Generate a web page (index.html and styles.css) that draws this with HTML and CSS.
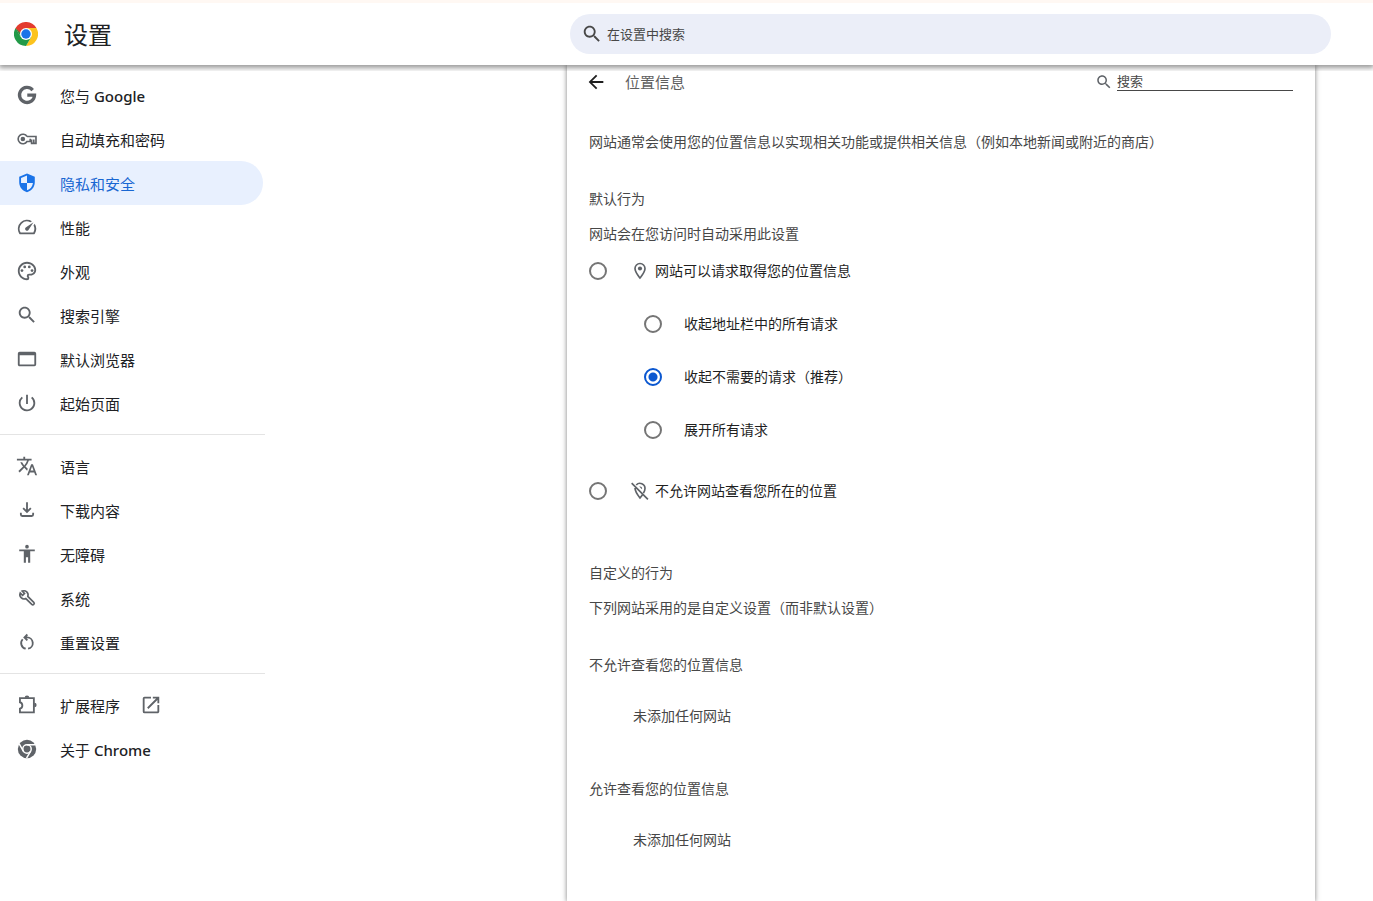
FILE: index.html
```html
<!DOCTYPE html>
<html lang="zh-CN">
<head>
<meta charset="utf-8">
<meta name="viewport" content="width=device-width, initial-scale=1">
<title>设置</title>
<link rel="stylesheet" href="styles.css">
</head>
<body>
<svg class="defs" aria-hidden="true">
  <symbol id="search" viewBox="0 0 24 24"><path d="M15.5 14h-.79l-.28-.27C15.41 12.59 16 11.11 16 9.5 16 5.91 13.09 3 9.5 3S3 5.91 3 9.5 5.91 16 9.5 16c1.61 0 3.09-.59 4.23-1.57l.27.28v.79l5 4.99L20.49 19l-4.99-5zm-6 0C7.01 14 5 11.99 5 9.5S7.01 5 9.5 5 14 7.01 14 9.5 11.99 14 9.5 14z"/></symbol>
</svg>
<header class="toolbar">
  <div class="brand">
    <svg class="logo" viewBox="0 0 48 48" aria-hidden="true">
      <path fill="#e33b2e" d="M24 24 3.2 12A24 24 0 0 1 44.8 12z"/>
      <path fill="#fcc31e" d="M24 24V12h20.8A24 24 0 0 1 24 48l10.4-18z"/>
      <path fill="#229a48" d="M34.4 30 24 48A24 24 0 0 1 3.2 12l10.4 18L24 24z"/>
      <path fill="#e33b2e" d="M24 12H3.200L10 24z"/>
      <path fill="#229a48" d="M3.200 12 13.600 30 24 24z"/>
      <path fill="#e33b2e" d="M3.200 12H24V24L12.500 22z"/>
      <circle cx="24" cy="24" r="12" fill="#fff"/>
      <circle cx="24" cy="24" r="9.5" fill="#1a73e8"/>
    </svg>
    <h1 class="brand-title">设置</h1>
  </div>
  <label class="main-search">
    <svg class="icon" aria-hidden="true"><use href="#search"/></svg>
    <input class="main-search-input" type="search" placeholder="在设置中搜索" aria-label="在设置中搜索">
  </label>
</header>
<div class="layout">
  <nav class="sidebar" aria-label="设置">
    <div class="menu">
      <a class="item" href="#"><svg class="icon" viewBox="0 0 24 24"><path class="line g" d="M18.200 6.600A8.200 8.200 0 1 0 20.200 12.200H12.300"/></svg><span>您与 <span class="latin">Google</span></span></a>
      <a class="item" href="#"><svg class="icon" viewBox="0 0 24 24"><path class="line key" d="M12 9.300A5.200 5.200 0 1 0 12 14.700H15.500V11.800M15.500 13.500H17V16.800H21.800V9.300H12M19.400 16.800V12.500"/><circle cx="7.500" cy="12" r="2.500"/></svg><span>自动填充和密码</span></a>
      <a class="item active" href="#" aria-current="page"><svg class="icon" viewBox="0 0 24 24"><path d="M12 1.700 3.500 5.200v6C3.500 16.300 7 20.800 12 22c5-1.200 8.500-5.700 8.500-10.800v-6zM12 12h6.500c-.5 3.800-3 7-6.500 8V12H5.500V6.500L12 3.800z"/></svg><span>隐私和安全</span></a>
      <a class="item" href="#"><svg class="icon" viewBox="0 0 24 24"><path d="m20.380 8.570-1.230 1.850a8 8 0 0 1-.22 7.580H5.070A8 8 0 0 1 15.580 6.850l1.850-1.230A10 10 0 0 0 3.350 19a2 2 0 0 0 1.720 1h13.850a2 2 0 0 0 1.740-1 10 10 0 0 0-.27-10.440zm-9.790 6.840a2 2 0 0 0 2.830 0l5.660-8.490-8.490 5.660a2 2 0 0 0 0 2.830z"/></svg><span>性能</span></a>
      <a class="item" href="#"><svg class="icon" viewBox="0 0 24 24"><path d="M12 22C6.490 22 2 17.510 2 12S6.490 2 12 2s10 4.040 10 9c0 3.310-2.690 6-6 6h-1.770c-.28 0-.5.22-.5.5 0 .12.05.23.13.33.41.47.64 1.060.64 1.670A2.500 2.500 0 0 1 12 22zm0-18c-4.410 0-8 3.590-8 8s3.590 8 8 8c.28 0 .5-.22.5-.5a.54.54 0 0 0-.14-.35c-.41-.46-.63-1.050-.63-1.650a2.500 2.500 0 0 1 2.500-2.500H16c2.210 0 4-1.790 4-4 0-3.860-3.590-7-8-7z"/><circle cx="6.500" cy="11.500" r="1.500"/><circle cx="9.500" cy="7.500" r="1.500"/><circle cx="14.500" cy="7.500" r="1.500"/><circle cx="17.500" cy="11.500" r="1.500"/></svg><span>外观</span></a>
      <a class="item" href="#"><svg class="icon"><use href="#search"/></svg><span>搜索引擎</span></a>
      <a class="item" href="#"><svg class="icon" viewBox="0 0 24 24"><path d="M20 4H4a2 2 0 0 0-2 2v12c0 1.100.9 2 2 2h16a2 2 0 0 0 2-2V6a2 2 0 0 0-2-2zm0 14H4V8h16z"/></svg><span>默认浏览器</span></a>
      <a class="item" href="#"><svg class="icon" viewBox="0 0 24 24"><path d="M13 3h-2v10h2V3zm4.830 2.170-1.420 1.420A6.920 6.920 0 0 1 19 12a7 7 0 1 1-11.420-5.420L6.170 5.170A8.930 8.930 0 0 0 3 12a9 9 0 1 0 14.830-6.830z"/></svg><span>起始页面</span></a>
    </div>
    <div class="menu">
      <a class="item" href="#"><svg class="icon" viewBox="0 0 24 24"><path d="m12.870 15.070-2.540-2.510.03-.03A17.520 17.520 0 0 0 14.070 6H17V4h-7V2H8v2H1v1.990h11.170C11.500 7.920 10.440 9.750 9 11.350 8.070 10.320 7.300 9.190 6.690 8h-2c.73 1.630 1.730 3.170 2.980 4.560l-5.090 5.020L4 19l5-5 3.110 3.110.76-2.040zM18.500 10h-2L12 22h2l1.120-3h4.750L21 22h2l-4.500-12zm-2.620 7 1.620-4.330L19.120 17h-3.240z"/></svg><span>语言</span></a>
      <a class="item" href="#"><svg class="icon" viewBox="0 0 24 24"><path class="line" d="M12 3.500v10.500M7.800 10l4.200 4.200 4.200-4.200M5.300 15V17a1.500 1.500 0 0 0 1.500 1.500h10.400a1.500 1.500 0 0 0 1.500-1.500v-2"/></svg><span>下载内容</span></a>
      <a class="item" href="#"><svg class="icon" viewBox="0 0 24 24"><path d="M12 2a2 2 0 1 1 0 4 2 2 0 0 1 0-4zm8.500 7H15.500v12.500h-2.300v-6h-2.400v6H8.500V9H3.500V7h17v2z"/></svg><span>无障碍</span></a>
      <a class="item" href="#"><svg class="icon" viewBox="0 0 24 24"><path class="line wrench" d="M6.800 4.500 9.300 7 7.200 9.100 4.600 6.600A4.600 4.600 0 0 0 10.700 12.600L17.200 18.900A1.500 1.500 0 0 0 19.400 16.700L12.900 10.300A4.600 4.600 0 0 0 6.800 4.500Z"/></svg><span>系统</span></a>
      <a class="item" href="#"><svg class="icon" viewBox="0 0 24 24"><path class="line" d="M13.200 19.300A6.200 6.200 0 0 0 12 7H9.500M10.600 19.300A6.200 6.200 0 0 1 7.300 9M12.400 3.800 9.200 7l3.200 3.200"/></svg><span>重置设置</span></a>
    </div>
    <div class="menu">
      <a class="item" href="#"><svg class="icon" viewBox="0 0 24 24"><path class="line" d="M5 4.500H19.500V20H4.300V16C7.800 15 7.800 10 4.300 9V4.500Z"/><path d="M9.500 4a2.500 2.500 0 0 1 5 0zM20 9.500a2.500 2.500 0 0 1 0 5z"/></svg><span>扩展程序</span><svg class="icon external" viewBox="0 0 24 24"><path d="M19 19H5V5h7V3H5a2 2 0 0 0-2 2v14a2 2 0 0 0 2 2h14c1.100 0 2-.9 2-2v-7h-2v7zM14 3v2h3.590l-9.830 9.830 1.410 1.410L19 6.410V10h2V3h-7z"/></svg></a>
      <a class="item" href="#"><svg class="icon" viewBox="0 0 24 24"><circle cx="12" cy="12" r="10"/><circle class="ring" cx="12" cy="12" r="4.600"/><path class="gap" d="M12 7.400H21.500M8 14.300 3.500 6.500M16 14.300 11.500 22"/></svg><span>关于 <span class="latin">Chrome</span></span></a>
    </div>
  </nav>
  <main class="card">
    <div class="card-head">
      <button class="back" type="button" aria-label="返回"><svg class="icon" viewBox="0 0 24 24"><path d="M20 11H7.830l5.590-5.590L12 4l-8 8 8 8 1.410-1.410L7.830 13H20v-2z"/></svg></button>
      <h2 class="card-title">位置信息</h2>
      <label class="filter"><svg class="icon filter-icon" aria-hidden="true"><use href="#search"/></svg><input class="filter-input" type="search" placeholder="搜索" aria-label="搜索"></label>
    </div>
    <p class="intro">网站通常会使用您的位置信息以实现相关功能或提供相关信息（例如本地新闻或附近的商店）</p>
    <section class="section">
      <h3 class="heading">默认行为</h3>
      <p class="note">网站会在您访问时自动采用此设置</p>
      <div class="choices">
        <label class="choice"><input class="radio" type="radio" name="access"><svg class="icon pin" viewBox="0 0 24 24"><path d="M12 2a7 7 0 0 0-7 7c0 5.250 7 13 7 13s7-7.750 7-13a7 7 0 0 0-7-7zM7 9a5 5 0 0 1 10 0c0 2.880-2.880 7.190-5 9.880C9.920 16.210 7 11.850 7 9z"/><circle cx="12" cy="9" r="2.500"/></svg><span>网站可以请求取得您的位置信息</span></label>
        <div class="subchoices">
          <label class="choice"><input class="radio" type="radio" name="prompt"><span>收起地址栏中的所有请求</span></label>
          <label class="choice"><input class="radio" type="radio" name="prompt" checked><span>收起不需要的请求（推荐）</span></label>
          <label class="choice"><input class="radio" type="radio" name="prompt"><span>展开所有请求</span></label>
        </div>
        <label class="choice"><input class="radio" type="radio" name="access"><svg class="icon pin" viewBox="0 0 24 24"><path class="line" d="M7.500 4.800A6 6 0 0 1 18 9c0 1.800-.8 3.700-1.900 5.600M6 8.500C6 12.500 9.500 17.300 12 20.400c.9-1.100 2-2.500 3-4M2 2.500 21.500 22"/><path d="M12 6.500a2.500 2.500 0 0 1 2.300 3.500L11 6.700z"/></svg><span>不允许网站查看您所在的位置</span></label>
      </div>
    </section>
    <section class="section custom">
      <h3 class="heading">自定义的行为</h3>
      <p class="note">下列网站采用的是自定义设置（而非默认设置）</p>
    </section>
    <section class="section">
      <h3 class="heading">不允许查看您的位置信息</h3>
      <p class="empty">未添加任何网站</p>
    </section>
    <section class="section allowed">
      <h3 class="heading">允许查看您的位置信息</h3>
      <p class="empty">未添加任何网站</p>
    </section>
  </main>
</div>
</body>
</html>
```
FILE: styles.css
```css
* { box-sizing: border-box; }
html { height: 100%; }
body {
  min-height: 100%;
  margin: 0;
  display: flex;
  flex-direction: column;
  background: #fff;
  color: #202124;
  font: 14px/20px "Noto Sans", "Noto Sans CJK SC", sans-serif;
}
h1, h2, h3, p { margin: 0; font-weight: 400; }
input, button { font: inherit; }
.defs { display: none; }
.icon { width: 22px; height: 22px; flex: none; fill: currentColor; }
.line { fill: none; stroke: currentColor; stroke-width: 2; }
.g { stroke-width: 3.6; }
.key, .wrench { stroke-width: 1.8; }
.ring { fill: none; stroke: #fff; stroke-width: 1.6; }
.gap { stroke: #fff; stroke-width: 1.6; }

.toolbar {
  position: relative;
  display: grid;
  grid-template-columns: minmax(200px, 1fr) minmax(0, 761px);
  align-items: center;
  padding: 11px 42px 11px 14px;
  background: #fff;
  border-top: 3px solid #fff8f3;
  box-shadow: 0 2px 5px 1px rgba(0, 0, 0, .4);
  clip-path: inset(0 0 -6px 0);
}
.brand { display: flex; align-items: center; gap: 26px; }
.logo { width: 24px; height: 24px; }
.brand-title { font-size: 24px; line-height: 36px; padding-top: 2px; }
.main-search {
  display: flex;
  align-items: center;
  gap: 4px;
  height: 40px;
  padding: 0 20px 0 11px;
  border-radius: 20px;
  background: #ebeef8;
  color: #474747;
}
.main-search-input {
  flex: 1;
  min-width: 0;
  padding: 0;
  border: 0;
  outline: 0;
  background: none;
  font-size: 13px;
}
.main-search-input::placeholder { color: #474747; }

.layout {
  flex: 1;
  display: grid;
  grid-template-columns: minmax(266px, 1fr) minmax(0, 748px);
  padding-right: 58px;
}
.sidebar { width: 265px; padding-top: 8px; }
.menu + .menu { margin-top: 9px; padding-top: 9px; border-top: 1px solid #e4e4e4; }
.item {
  display: flex;
  align-items: center;
  height: 44px;
  margin-right: 2px;
  padding-left: 16px;
  gap: 22px;
  border-radius: 0 22px 22px 0;
  color: #202124;
  font-size: 15px;
  text-decoration: none;
}
.item > span { padding-top: 2px; }
.latin { font-weight: 500; }
.item .icon { color: #5f6368; }
.item .external { margin-left: -2px; }
.active { background: #e8f0fe; color: #1967d2; }
.active .icon { color: #1a73e8; }

.card {
  padding: 7px 22px 52px;
  background: #fff;
  color: #474747;
  box-shadow: 0 0 5px rgba(0, 0, 0, .5);
}
.card-head { display: flex; align-items: center; height: 20px; }
.back {
  display: flex;
  margin: 0 18px 0 -4px;
  padding: 0;
  border: 0;
  background: none;
  color: #1f1f1f;
}
.card-title { flex: 1; color: #5f5f5f; font-size: 15px; }
.filter { display: flex; align-items: center; gap: 4px; color: #5f6368; }
.filter-icon { width: 18px; height: 18px; }
.filter-input {
  width: 176px;
  height: 18px;
  padding: 0 0 2px;
  border: 0;
  border-bottom: 1px solid #474747;
  outline: 0;
  border-radius: 0;
  background: none;
  font-size: 13px;
}
.filter-input::placeholder { color: #474747; }
.intro { margin-top: 40px; }
.section { margin-top: 37px; }
.heading { font-size: 14px; }
.note { margin-top: 15px; }
.choices { margin-top: 17px; }
.choice { display: flex; align-items: center; height: 20px; color: #1f1f1f; }
.radio {
  appearance: none;
  flex: none;
  width: 18px;
  height: 18px;
  margin: 0;
  border: 2px solid #757575;
  border-radius: 50%;
}
.radio:checked {
  border-color: #0b57d0;
  background: radial-gradient(circle, #0b57d0 4px, transparent 5px);
}
.pin { width: 20px; height: 20px; margin: 0 5px 0 23px; color: #5f6368; }
.subchoices { display: grid; gap: 33px; margin: 33px 0 41px 55px; }
.subchoices .radio { margin-right: 22px; }
.custom { margin-top: 62px; }
.empty { margin: 31px 0 0 44px; }
.allowed { margin-top: 53px; }
```
